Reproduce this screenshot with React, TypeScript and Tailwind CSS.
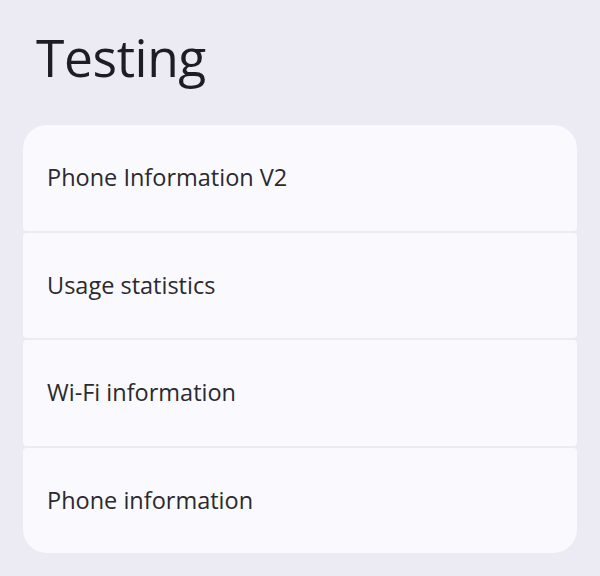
const items = [
  "Phone Information V2",
  "Usage statistics",
  "Wi-Fi information",
  "Phone information",
];

export default function App() {
  return (
    <div
      className="w-[600px] h-[576px] bg-[#ecebf4] px-[23px] overflow-hidden"
      style={{ fontFamily: '"Open Sans", sans-serif' }}
    >
      <h1 className="pt-[23px] pl-[13px] h-[125px] text-[51.5px] leading-[68px] text-[#1e1d24] tracking-[-0.4px]">
        Testing
      </h1>
      <div className="flex flex-col gap-[2px] rounded-[24px] overflow-hidden">
        {items.map((label) => (
          <div
            key={label}
            className="h-[105.5px] bg-[#faf9fd] rounded-[4px] flex items-center pl-[24px]"
          >
            <span className="text-[23.5px] text-[#2a2a2f]">{label}</span>
          </div>
        ))}
      </div>
    </div>
  );
}
